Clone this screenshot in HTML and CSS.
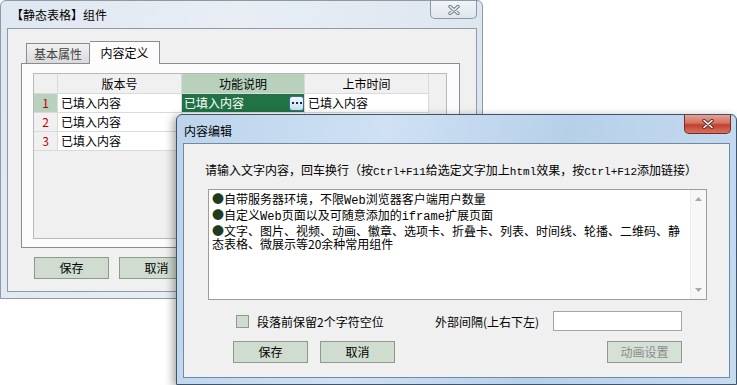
FILE: index.html
```html
<!DOCTYPE html>
<html lang="zh-CN">
<head>
  <meta charset="UTF-8" />
  <meta name="viewport" content="width=device-width, initial-scale=1.0" />
  <title>内容编辑</title>
  <link rel="stylesheet" href="styles.css">
</head>
<body>
  <div class="desk">

    <!-- back window: table component -->
    <div class="win win-back">
      <div class="titlebar">
        <span class="title">【静态表格】组件</span>
        <span class="close close-idle">
          <svg width="12" height="10" viewBox="0 0 12 10"><path d="M2 1.5 L10 8.5 M10 1.5 L2 8.5" stroke="#6f7780" stroke-width="3.4" stroke-linecap="round"/><path d="M2 1.5 L10 8.5 M10 1.5 L2 8.5" stroke="#f4f6f8" stroke-width="1.6" stroke-linecap="round"/></svg>
        </span>
      </div>
      <div class="client">
        <div class="tabs">
          <span class="tab">基本属性</span>
          <span class="tab tab-on">内容定义</span>
        </div>
        <div class="panel">
          <div class="grid">
            <div class="row head">
              <span class="cell num"></span>
              <span class="cell c1 mid">版本号</span>
              <span class="cell c2 mid sel-head">功能说明</span>
              <span class="cell c3 mid">上市时间</span>
            </div>
            <div class="row">
              <span class="cell num num-on">1</span>
              <span class="cell c1">已填入内容</span>
              <span class="cell c2 sel">已填入内容<span class="dots"><i></i><i></i><i></i></span></span>
              <span class="cell c3">已填入内容</span>
            </div>
            <div class="row">
              <span class="cell num">2</span>
              <span class="cell c1">已填入内容</span>
              <span class="cell c2"></span>
              <span class="cell c3"></span>
            </div>
            <div class="row">
              <span class="cell num">3</span>
              <span class="cell c1">已填入内容</span>
              <span class="cell c2"></span>
              <span class="cell c3"></span>
            </div>
          </div>
        </div>
        <div class="btns">
          <button class="btn">保存</button>
          <button class="btn">取消</button>
        </div>
      </div>
    </div>

    <!-- front dialog: content editor -->
    <div class="win win-front">
      <div class="titlebar">
        <span class="title">内容编辑</span>
        <span class="close close-red">
          <svg width="12" height="10" viewBox="0 0 12 10"><path d="M2 1.5 L10 8.5 M10 1.5 L2 8.5" stroke="#5a2a26" stroke-width="3.4" stroke-linecap="round"/><path d="M2 1.5 L10 8.5 M10 1.5 L2 8.5" stroke="#ffffff" stroke-width="1.6" stroke-linecap="round"/></svg>
        </span>
      </div>
      <div class="client">
        <p class="hint">请输入文字内容，回车换行（按<span class="mono">Ctrl+F11</span>给选定文字加上<span class="mono">html</span>效果，按<span class="mono">Ctrl+F12</span>添加链接）</p>
        <div class="memo">
          <div class="memo-text">
            <span class="dot">●</span>自带服务器环境，不限<span class="mono">Web</span>浏览器客户端用户数量<br>
            <span class="dot">●</span>自定义<span class="mono">Web</span>页面以及可随意添加的<span class="mono">iframe</span>扩展页面<br>
            <span class="dot">●</span>文字、图片、视频、动画、徽章、选项卡、折叠卡、列表、时间线、轮播、二维码、静<br>
            态表格、微展示等20余种常用组件
          </div>
          <div class="scroll">
            <svg width="7" height="4" viewBox="0 0 7 4"><polygon points="0,4 3.5,0 7,4" fill="#a8a8a8"/></svg>
            <svg width="7" height="4" viewBox="0 0 7 4"><polygon points="0,0 3.5,4 7,0" fill="#a8a8a8"/></svg>
          </div>
        </div>
        <div class="opts">
          <label class="chk-group"><span class="chk"></span>段落前保留2个字符空位</label>
          <span class="gap-label">外部间隔(上右下左)</span>
          <span class="field"></span>
        </div>
        <div class="actions">
          <button class="btn">保存</button>
          <button class="btn">取消</button>
          <button class="btn btn-off">动画设置</button>
        </div>
      </div>
    </div>

  </div>
</body>
</html>
```

FILE: styles.css
```css
body { margin: 0; background: #fff; font-family: "Noto Sans CJK SC", "Microsoft YaHei", sans-serif; font-size: 12px; color: #000; }
.desk { position: relative; width: 737px; height: 385px; overflow: hidden; }

/* windows */
.win { position: absolute; box-sizing: border-box; display: flex; flex-direction: column; border: 1px solid; border-radius: 6px 6px 0 0; }
.win-back { left: 0; top: 0; width: 483px; height: 299px; padding: 0 5px 6px 6px; border-color: #8e99a6; background: linear-gradient(100deg, #dfe7f0 0%, #e9eef5 45%, #dbe4ee 100%); }
.win-front { left: 176px; top: 114px; width: 561px; height: 271px; padding: 0 6px 6px 6px; border-color: #3f5369; background: linear-gradient(100deg, #bcd4ec 0%, #cfe1f3 35%, #b7d0ea 65%, #c6dbf0 100%); box-shadow: -3px 2px 8px rgba(0, 0, 0, 0.35); }

.titlebar { display: flex; align-items: flex-start; flex: none; }
.win-back .titlebar { height: 27px; }
.win-front .titlebar { height: 28px; }
.title { line-height: 14px; white-space: nowrap; }
.win-back .title { margin: 7px 0 0 4px; }
.win-front .title { margin: 9px 0 0 1px; }

.close { margin-left: auto; display: flex; align-items: center; justify-content: center; box-sizing: border-box; width: 47px; border: 1px solid; border-top: none; border-radius: 0 0 5px 5px; }
.close-idle { height: 18px; border-color: #8d98a5; background: linear-gradient(#f1f4f8, #dfe6ee); }
.close-red { height: 19px; margin-right: -1px; border-color: #6e2e2a; background: linear-gradient(#e6a196 0%, #d5705f 45%, #c2402f 55%, #d7735f 100%); }

.client { flex: 1; box-sizing: border-box; background: #f0f0f0; border: 1px solid #8d9aa8; }
.win-front .client { border-color: #6f8aa6; }

/* tabs */
.tabs { display: flex; align-items: flex-end; height: 22px; margin: 12px 0 0 18px; }
.tab { box-sizing: border-box; height: 20px; width: 64px; border: 1px solid #898c95; border-bottom: none; background: linear-gradient(#f2f2f2, #dadada); color: #444; font-size: 12px; line-height: 19px; text-align: center; }
.tab-on { position: relative; z-index: 1; width: 70px; height: 23px; margin-bottom: -1px; background: #fcfcfc; color: #000; line-height: 22px; border-left: none; }
.panel { box-sizing: border-box; height: 185px; width: 439px; margin-left: 13px; border: 1px solid #898c95; background: #fcfcfc; padding: 9px 0 0 11px; }

/* grid */
.grid { box-sizing: border-box; width: 414px; height: 166px; border: 1px solid #b8b8b8; background: #f0f0f0; }
.row { display: flex; height: 19px; }
.row.head { height: 20px; }
.cell { box-sizing: border-box; border-right: 1px solid #dadada; border-bottom: 1px solid #dadada; background: #fff; padding-left: 3px; line-height: 18px; white-space: nowrap; }
.head .cell { background: #f0f0f0; line-height: 19px; }
.num { width: 24px; padding: 0; text-align: center; color: #c00000; background: #f0f0f0; }
.num-on { background: #b7d1bd; }
.c1 { width: 124px; }
.c2 { width: 123px; }
.c3 { width: 124px; }
.mid { text-align: center; padding: 0; }
.head .sel-head { background: #b7d1bd; }
.sel { display: flex; align-items: center; background: #217346; color: #fff; padding-left: 2px; padding-right: 0; }
.dots { display: flex; align-items: center; justify-content: center; gap: 2px; box-sizing: border-box; width: 15px; height: 15px; margin-left: auto; border: 1px solid #3b6d9b; border-radius: 3px; background: linear-gradient(#f2f8fd, #c9def1); }
.dots i { width: 2px; height: 2px; background: #1b2a3a; }

/* buttons */
.btns { display: flex; gap: 10px; margin: 9px 0 0 26px; }
.btn { box-sizing: border-box; width: 75px; height: 22px; padding: 0; border: 1px solid #8b9a8b; background: #cfdccf; font-family: inherit; font-size: 12px; color: #000; line-height: 20px; }
.btn-off { color: #8c8c8c; background: #d6e0d6; }

/* editor dialog */
.hint { margin: 19px 0 0 21px; line-height: 14px; white-space: nowrap; }
.mono { font-family: "Liberation Mono", monospace; font-size: 11px; }
.memo { display: flex; box-sizing: border-box; width: 499px; height: 111px; margin: 10px 0 0 24px; border: 1px solid #9a9f9a; background: #fff; }
.memo-text { flex: 1; padding: 2px 0 0 3px; line-height: 13px; white-space: nowrap; }
.memo-text .mono { font-size: 12px; }
.dot { color: #1f3b22; }
.scroll { display: flex; flex-direction: column; justify-content: space-between; align-items: center; width: 16px; padding: 7px 0 7px; box-sizing: border-box; background: #f7f7f7; border-left: 1px solid #ececec; }

.opts { display: flex; align-items: center; height: 20px; margin: 11px 0 0 52px; }
.chk-group { display: flex; align-items: center; width: 199px; }
.chk { box-sizing: border-box; width: 13px; height: 13px; margin-right: 8px; border: 1px solid #8b9a8b; background: #cfdccf; }
.gap-label { width: 118px; white-space: nowrap; }
.field { box-sizing: border-box; width: 129px; height: 20px; border: 1px solid #a5a5a5; background: #fff; }

.actions { display: flex; gap: 12px; margin: 10px 0 0 49px; padding-right: 47px; }
.actions .btn-off { margin-left: auto; }
```
